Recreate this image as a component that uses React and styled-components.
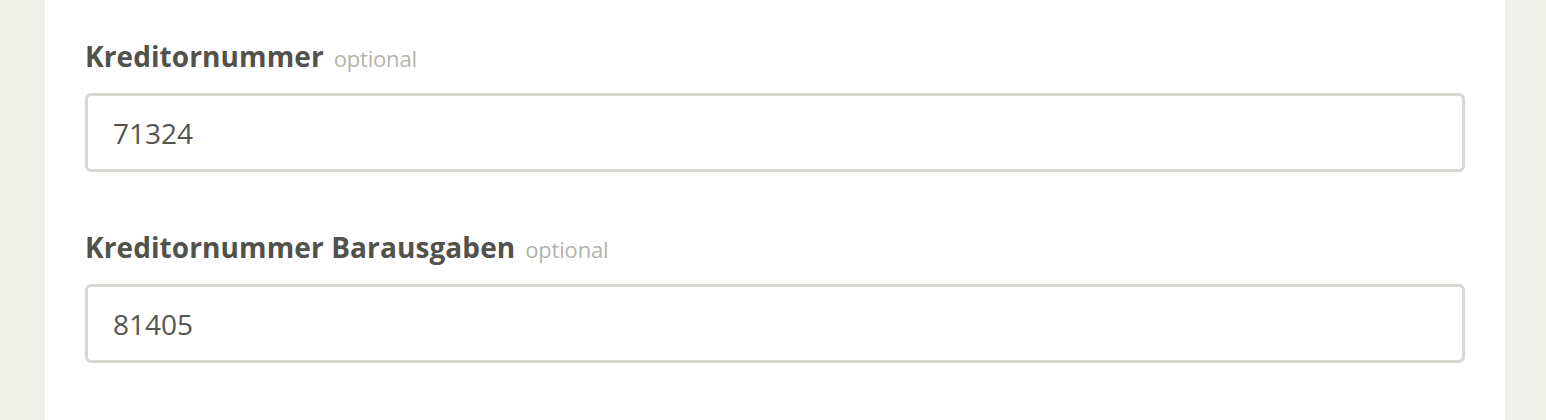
import React from 'react'
import styled, { createGlobalStyle } from 'styled-components'

const GlobalStyle = createGlobalStyle`
  html, body {
    margin: 0;
    padding: 0;
    background-color: #efefea;
    font-family: "Open Sans", Lato, sans-serif;
  }
`

const Page = styled.div`
  display: flex;
  padding: 0 41px 0 45px;
  min-height: 420px;
  box-sizing: border-box;
`

const Panel = styled.div`
  flex: 1;
  background-color: #fff;
  padding: 38px 40px 0 40px;
  min-height: 420px;
  box-sizing: border-box;
`

const Field = styled.div`
  margin-bottom: 57px;
`

const Label = styled.label`
  display: flex;
  align-items: baseline;
  gap: 10px;
  font-size: 28px;
  font-weight: 700;
  line-height: 36px;
  letter-spacing: 0.1px;
  color: #52524d;
  margin-bottom: 17px;
`

const Optional = styled.span`
  font-size: 22px;
  font-weight: 400;
  letter-spacing: -0.2px;
  color: #b3b3ab;
`

const Input = styled.input`
  display: block;
  width: 100%;
  height: 79px;
  box-sizing: border-box;
  border: 3px solid #d8d8d2;
  border-radius: 6px;
  padding: 0 25px;
  font-family: "Open Sans", Lato, sans-serif;
  font-size: 28px;
  color: #55554f;
  background: #fff;
  outline: none;
`

const fields = [
  { label: 'Kreditornummer', value: '71324' },
  { label: 'Kreditornummer Barausgaben', value: '81405' },
]

export default function App() {
  return (
    <>
      <GlobalStyle />
      <Page>
        <Panel>
          {fields.map((f) => (
            <Field key={f.label}>
              <Label>
                {f.label}
                <Optional>optional</Optional>
              </Label>
              <Input defaultValue={f.value} readOnly />
            </Field>
          ))}
        </Panel>
      </Page>
    </>
  )
}
